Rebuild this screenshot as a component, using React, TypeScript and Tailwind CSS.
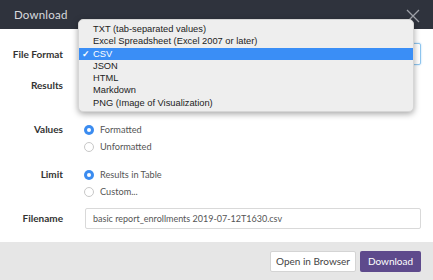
import React from "react";

const formats = [
  "TXT (tab-separated values)",
  "Excel Spreadsheet (Excel 2007 or later)",
  "CSV",
  "JSON",
  "HTML",
  "Markdown",
  "PNG (Image of Visualization)",
];

function Radio({ label, checked }: { label: string; checked?: boolean }) {
  return (
    <div className="flex items-center h-[17px]">
      {checked ? (
        <span className="w-[10px] h-[10px] rounded-full bg-[#3b8cf0] flex items-center justify-center ml-[-1px]">
          <span className="w-[4px] h-[4px] rounded-full bg-white" />
        </span>
      ) : (
        <span className="w-[10px] h-[10px] rounded-full border border-[#c8c8c8] bg-white ml-[-1px]" />
      )}
      <span className="ml-[6px] text-[9.2px] text-[#555]">{label}</span>
    </div>
  );
}

function Row({ label, top, children }: { label: string; top: string; children?: React.ReactNode }) {
  return (
    <div className={`flex ${top}`}>
      <div className="w-[63px] mr-[22px] text-right text-[10px] font-bold text-[#333] leading-[17px] shrink-0">
        {label}
      </div>
      <div className="flex-1">{children}</div>
    </div>
  );
}

export default function App() {
  return (
    <div
      className="relative w-[433px] h-[280px] overflow-hidden bg-white"
      style={{ fontFamily: 'Lato, "Open Sans", sans-serif' }}
    >
      <header className="h-[29px] bg-[#2f333d] flex items-center justify-between pl-[14px] pr-[12px]">
        <span className="text-[11.5px] text-[#d8dadf] tracking-[0.2px]">Download</span>
        <svg width="16" height="16" viewBox="0 0 16 16" className="mt-[2px]">
          <path d="M2 2 L14 14 M14 2 L2 14" stroke="#9ea1a8" strokeWidth="1.3" />
        </svg>
      </header>

      <div className="flex flex-col pr-[12px] h-[213px]">
        <div className="flex mt-[14px] items-center h-[22px]">
          <div className="w-[63px] mr-[22px] text-right text-[10px] font-bold text-[#333] shrink-0">
            File Format
          </div>
          <div className="flex-1 h-[22px] border border-[#8ec5ee] rounded-[2px] shadow-[0_0_2px_#a7d3f5]" />
        </div>
        <div className="flex mt-[10px] items-center h-[20px]">
          <div className="w-[63px] mr-[22px] text-right text-[10px] font-bold text-[#333] shrink-0">
            Results
          </div>
        </div>
        <Row label="Values" top="mt-[26px]">
          <Radio label="Formatted" checked />
          <Radio label="Unformatted" />
        </Row>
        <Row label="Limit" top="mt-[11px]">
          <Radio label="Results in Table" checked />
          <Radio label="Custom..." />
        </Row>
        <div className="flex mt-[8px] items-center">
          <div className="w-[63px] mr-[22px] text-right text-[10px] font-bold text-[#333] shrink-0">
            Filename
          </div>
          <div className="flex-1 h-[21px] border border-[#d9d9d9] rounded-[2px] flex items-center pl-[7px] text-[9px] text-[#555]">
            basic report_enrollments 2019-07-12T1630.csv
          </div>
        </div>
      </div>

      <footer className="h-[38px] bg-[#e6e6e6] flex items-center justify-end gap-[4px] pr-[12px]">
        <button className="h-[21px] w-[86px] bg-white border border-[#d4d4d4] rounded-[2px] text-[10px] text-[#444]">
          Open in Browser
        </button>
        <button className="h-[21px] w-[61px] bg-[#5e4a8c] rounded-[2px] text-[10px] text-white">
          Download
        </button>
      </footer>

      <div
        className="absolute left-[78px] top-[19px] w-[336px] h-[93px] bg-[#eeeeee] rounded-[5px] shadow-[0_2px_6px_rgba(0,0,0,0.35)] border border-[#d6d6d6] pt-[3px]"
        style={{ fontFamily: '"Liberation Sans", Arial, sans-serif' }}
      >
        {formats.map((f) => (
          <div
            key={f}
            className={`relative h-[12.3px] leading-[12.3px] pl-[14px] text-[9.3px] ${
              f === "CSV" ? "bg-[#3a8ef6] text-white" : "text-[#222]"
            }`}
          >
            {f === "CSV" && <span className="absolute left-[3px] top-0 text-[9px] font-bold">✓</span>}
            {f}
          </div>
        ))}
      </div>
    </div>
  );
}
